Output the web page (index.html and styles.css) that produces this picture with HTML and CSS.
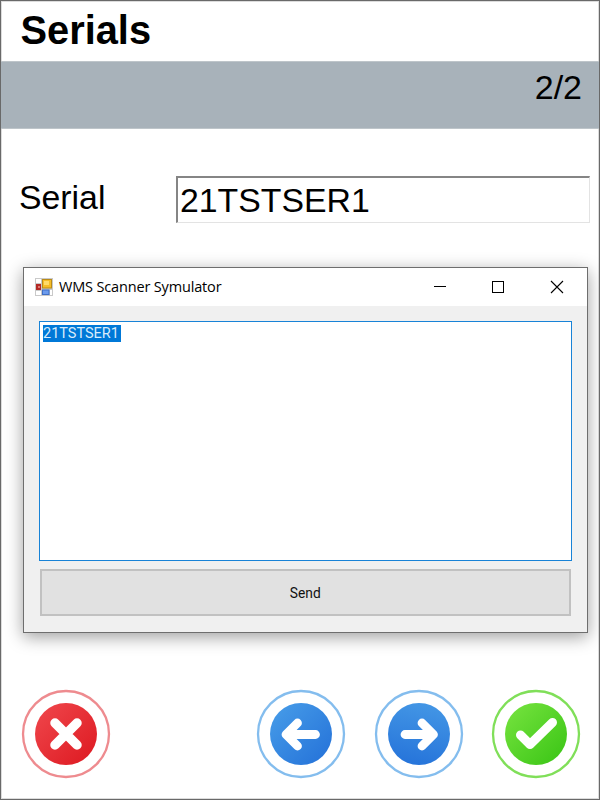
FILE: index.html
```
<!DOCTYPE html>
<html lang="en">
<head>
<meta charset="utf-8">
<title>Serials</title>
<link rel="stylesheet" href="styles.css">
</head>
<body>
<main class="screen">
  <h1 class="title">Serials</h1>
  <div class="band"><span>2/2</span></div>
  <div class="field">
    <label class="label">Serial</label>
    <div class="input"><span>21TSTSER1</span></div>
  </div>
  <nav class="actions">
    <svg class="action cancel" viewBox="-45 -45 90 90">
      <defs><linearGradient id="red" x1="0" y1="0" x2="1" y2="1"><stop offset="0" stop-color="#f0484d"/><stop offset="1" stop-color="#dd1820"/></linearGradient></defs>
      <circle r="43" fill="none" stroke="#ee8b8f" stroke-width="2.300"/>
      <circle r="31" fill="url(#red)"/>
      <path d="M-11-11L11 11M11-11L-11 11" fill="none" stroke="#fff" stroke-width="9.500" stroke-linecap="round"/>
    </svg>
    <svg class="action" viewBox="-45 -45 90 90">
      <defs><linearGradient id="blue" x1="0" y1="0" x2="1" y2="1"><stop offset="0" stop-color="#489ee9"/><stop offset="1" stop-color="#2370d8"/></linearGradient></defs>
      <circle r="43" fill="none" stroke="#84bdee" stroke-width="2.300"/>
      <circle r="31" fill="url(#blue)"/>
      <path d="M14.500 .500H-13M-3.500-11L-15 .500L-3.500 12" fill="none" stroke="#fff" stroke-width="8.800" stroke-linecap="round" stroke-linejoin="round"/>
    </svg>
    <svg class="action" viewBox="-45 -45 90 90">
      <defs><linearGradient id="blue2" x1=".6" y1="0" x2=".4" y2="1"><stop offset="0" stop-color="#4396e5"/><stop offset="1" stop-color="#2674da"/></linearGradient></defs>
      <circle r="43" fill="none" stroke="#84bdee" stroke-width="2.300"/>
      <circle r="31" fill="url(#blue2)"/>
      <path d="M-14 .500H13M3-11L14.500 .500L3 12" fill="none" stroke="#fff" stroke-width="8.800" stroke-linecap="round" stroke-linejoin="round"/>
    </svg>
    <svg class="action" viewBox="-45 -45 90 90">
      <defs><linearGradient id="green" x1="0" y1="0" x2="1" y2="1"><stop offset="0" stop-color="#78e440"/><stop offset="1" stop-color="#38c414"/></linearGradient></defs>
      <circle r="43" fill="none" stroke="#80df59" stroke-width="2.300"/>
      <circle r="31" fill="url(#green)"/>
      <path d="M-15.500 1L-6 10.500L16.500-11.500" fill="none" stroke="#fff" stroke-width="9" stroke-linecap="round" stroke-linejoin="round"/>
    </svg>
  </nav>
  <section class="window">
    <header class="titlebar">
      <svg class="app-icon" viewBox="0 0 18 18">
        <rect width="18" height="18" fill="#c9c9c9"/>
        <rect x="1" y="1" width="5" height="4" fill="#fff"/><rect x="1" y="13" width="5" height="4" fill="#fff"/><rect x="15" y="12" width="2" height="5" fill="#fff"/>
        <rect x="1" y="6" width="5" height="6" fill="#b42825"/><rect x="3" y="8" width="2" height="2" fill="#df7770"/>
        <rect x="7.500" y="1.500" width="9" height="8.500" fill="#f5bd27" stroke="#b98b19"/><rect x="9" y="3" width="5" height="4" fill="#ffdc68"/>
        <rect x="7.500" y="12" width="6.500" height="4.500" fill="#6c9bed" stroke="#3f6fc5"/>
      </svg>
      <span class="caption">WMS Scanner Symulator</span>
      <svg class="controls" viewBox="0 0 140 38">
        <rect x="2" y="18" width="12" height="1" fill="#000"/>
        <rect x="60.500" y="13.500" width="11" height="11" fill="none" stroke="#000"/>
        <path d="M119 13L131 25M131 13L119 25" stroke="#000" stroke-width="1.100"/>
      </svg>
    </header>
    <div class="body">
      <div class="editor"><span class="selection"><span class="selected-text">21TSTSER1</span></span></div>
      <button class="send"><span>Send</span></button>
    </div>
  </section>
</main>
</body>
</html>
```
FILE: styles.css
```
* { box-sizing: border-box; }
body { margin: 0; background: #fff; }
.screen {
  position: relative;
  display: flex;
  flex-direction: column;
  width: 600px;
  height: 800px;
  overflow: hidden;
  border: 1px solid #696969;
  box-shadow: inset 0 0 0 1px #dcdcdc;
  font-family: "Liberation Sans", Arial, sans-serif;
  color: #000;
}
.title {
  margin: 0;
  height: 60px;
  padding-left: 19.500px;
  font-size: 39.800px;
  line-height: 58px;
  font-weight: 700;
}
.band {
  height: 68px;
  padding-right: 17px;
  background: #a8b2ba;
  border-top: 1px solid #bec5ca;
  border-bottom: 1px solid #bec5ca;
  text-align: right;
  font-size: 34px;
  line-height: 51px;
}
.field { display: flex; margin-top: 47px; padding-left: 18px; font-size: 33.800px; }
.label { width: 157px; line-height: 42px; }
.input {
  width: 414px;
  height: 47px;
  padding-left: 2px;
  border: 1px solid #e3e3e3;
  border-top: 2px solid #858585;
  border-left: 2px solid #858585;
  line-height: 45px;
}
.actions { display: flex; margin: auto 18px 20px 20px; }
.action { width: 90px; height: 90px; margin-right: 27.500px; }
.action:last-child { margin-right: 0; }
.cancel { margin-right: auto; }
.window {
  position: absolute;
  left: 22px;
  top: 266px;
  width: 565px;
  height: 366px;
  border: 1px solid #6e6e6e;
  background: #f0f0f0;
  box-shadow: 0 4px 16px rgba(0, 0, 0, .38);
}
.titlebar { display: flex; align-items: center; height: 38px; padding-left: 11px; background: #fff; }
.app-icon { width: 18px; height: 18px; }
.caption { margin-left: 6px; padding-bottom: 2px; font: 14.500px "Open Sans", "Noto Sans", sans-serif; letter-spacing: -.16px; }
.controls { width: 140px; height: 38px; margin-left: auto; margin-right: 15px; }
.body { display: flex; flex-direction: column; gap: 8px; padding: 15px; }
.editor {
  width: 533px;
  height: 240px;
  padding: 3px;
  border: 1px solid;
  border-color: #1883d7;
  background: #fff;
  font: 14.500px/18px Roboto, sans-serif;
}
.selection { display: block; width: 78px; height: 17px; background: #0078d7; color: #d9ecfb; }
.selected-text { display: inline-block; transform: scaleX(1); transform-origin: left; }
.send {
  width: 531px;
  height: 47px;
  margin-left: 1px;
  border: 2px solid #c1c1c1;
  background: #e1e1e1;
  padding: 2px 0 0;
  font: 14.500px Roboto, sans-serif;
  color: #111;
}
.send span { display: inline-block; transform: scaleX(.95); }
```
